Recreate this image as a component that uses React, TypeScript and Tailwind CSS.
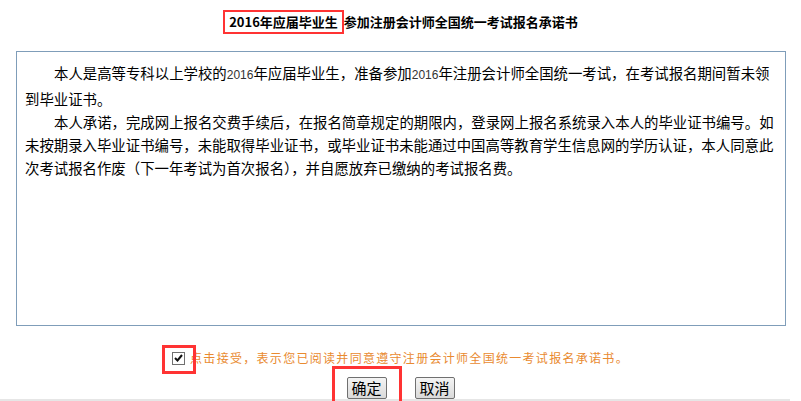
const cjk = "font-['SimSun','Noto_Sans_CJK_SC',sans-serif]";

const Num = ({ children }: { children: string }) => (
  <span className="font-['Liberation_Sans',sans-serif] text-[12px] text-[#333]">{children}</span>
);

export default function App() {
  return (
    <div className={`relative h-[401px] w-[801px] overflow-hidden bg-white ${cjk}`}>
      {/* title */}
      <div className="flex h-[42px] items-center justify-center pt-[1px]">
        <h1 className="text-[13px] font-bold leading-[18px] text-black">
          <span className="inline-block border-2 border-[#f33] px-[4px] py-[1px]">2016年应届毕业生</span>参加注册会计师全国统一考试报名承诺书
        </h1>
      </div>

      {/* promise text box */}
      <div className="ml-[16px] mt-[9px] h-[275px] w-[770px] border border-[#7f9db9] px-[8px] pt-[9px] text-[14.4px] leading-[23px] text-black">
        <p className="whitespace-nowrap">
          <span className="inline-block w-[29px]" />
          本人是高等专科以上学校的<Num>2016</Num>年应届毕业生，准备参加<Num>2016</Num>
          年注册会计师全国统一考试，在考试报名期间暂未领
        </p>
        <p className="whitespace-nowrap">到毕业证书。</p>
        <p className="whitespace-nowrap">
          <span className="inline-block w-[29px]" />
          本人承诺，完成网上报名交费手续后，在报名简章规定的期限内，登录网上报名系统录入本人的毕业证书编号。如
        </p>
        <p className="whitespace-nowrap">
          未按期录入毕业证书编号，未能取得毕业证书，或毕业证书未能通过中国高等教育学生信息网的学历认证，本人同意此
        </p>
        <p className="whitespace-nowrap">
          次考试报名作废（下一年考试为首次报名），并自愿放弃已缴纳的考试报名费。
        </p>
      </div>

      {/* accept */}
      <div className="mt-[20px] flex h-[24px] items-center justify-center">
        <label className="relative flex items-center gap-[5px]">
          <span className="relative flex h-[13px] w-[13px] items-center justify-center border border-[#707070] bg-white">
            <svg width="9" height="8" viewBox="0 0 9 8">
              <path d="M1 4 L3.5 6.5 L8 1" fill="none" stroke="#111" strokeWidth="2" />
            </svg>
            <span className="absolute left-[-11px] top-[-8px] h-[29px] w-[34px] border-[3px] border-[#f33]" />
          </span>
          <span className="text-[12px] leading-[16px] tracking-[1.3px] text-[#e98a30]">
            点击接受，表示您已阅读并同意遵守注册会计师全国统一考试报名承诺书。
          </span>
        </label>
      </div>

      {/* buttons */}
      <div className="mt-[7px] flex justify-center gap-[28px]">
        <button className="relative h-[22px] w-[40px] rounded-[2px] border border-[#707070] bg-gradient-to-b from-[#f4f4f4] to-[#dadada] text-[15px] leading-[20px] text-black">
          确定
          <span className="absolute left-[-16px] top-[-12px] h-[40px] w-[70px] border-[3px] border-[#f33]" />
        </button>
        <button className="h-[22px] w-[40px] rounded-[2px] border border-[#707070] bg-gradient-to-b from-[#f4f4f4] to-[#dadada] text-[15px] leading-[20px] text-black">
          取消
        </button>
      </div>

      <div className="h-[2px] w-[790px] bg-[#e6e6e6]" />
    </div>
  );
}
